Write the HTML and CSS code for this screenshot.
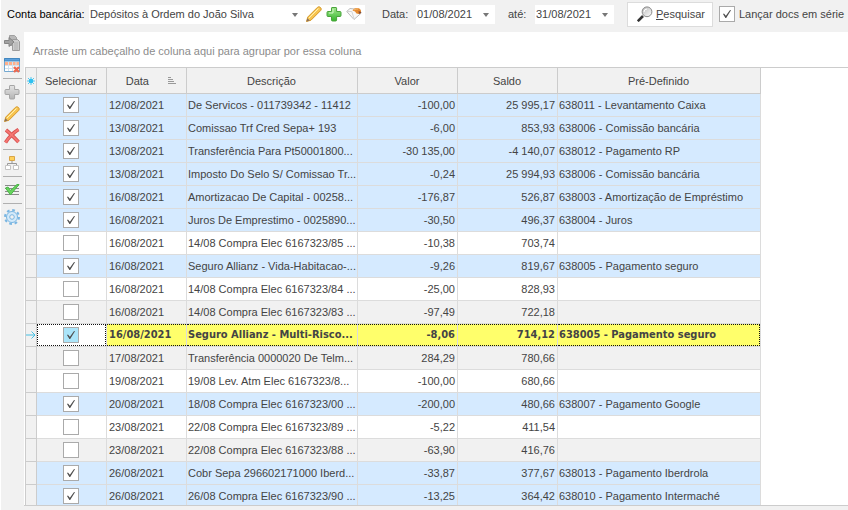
FILE: index.html
```html
<!DOCTYPE html>
<html lang="pt">
<head>
<meta charset="utf-8">
<title>Conta bancária</title>
<link rel="stylesheet" href="styles.css">
</head>
<body>
<svg class="defs" aria-hidden="true">
  <defs>
    <linearGradient id="gold" x1="0" y1="0" x2="1" y2="1"><stop offset="0" stop-color="#ffe48a"/><stop offset="1" stop-color="#f0a81e"/></linearGradient>
    <linearGradient id="green" x1="0" y1="0" x2="0" y2="1"><stop offset="0" stop-color="#a4e890"/><stop offset="1" stop-color="#35b52c"/></linearGradient>
    <linearGradient id="silver" x1="0" y1="0" x2="0" y2="1"><stop offset="0" stop-color="#e4e4e4"/><stop offset="1" stop-color="#b4b4b4"/></linearGradient>
    <linearGradient id="lens" x1="0" y1="0" x2="1" y2="1"><stop offset="0" stop-color="#b8b8b8"/><stop offset="1" stop-color="#ffffff"/></linearGradient>
    <symbol id="pencil" viewBox="0 0 16 16"><path d="M.5 15.500 1.800 11 11.500 1.300q1.500-1.300 3 .2t.2 3L5 14.200z" fill="url(#gold)" stroke="#d59a2d"/><path d="M3 12 12.500 2.500" stroke="#fff0ae"/><path d="M.4 15.600 1.400 12.200 3.800 14.600z" fill="#8b705c"/></symbol>
    <symbol id="plus" viewBox="0 0 16 16"><path d="M6 1.500h4q.6 0 .6.600V5.500H14q1 0 1 1v3q0 1-1 1h-3.400V14q0 1-1 1H6.500q-1 0-1-1v-3.500H2q-1 0-1-1v-3q0-1 1-1h3.500V2.100q0-.6.5-.6z"/></symbol>
  </defs>
</svg>
<form class="filters">
  <label class="account-label" for="account">Conta bancária:</label>
  <div class="account">
    <div class="combo"><select id="account"><option>Depósitos à Ordem do João Silva</option></select></div>
    <button type="button" class="icon-button" aria-label="Editar"><svg viewBox="0 0 16 16"><use href="#pencil"/></svg></button>
    <button type="button" class="icon-button" aria-label="Adicionar"><svg viewBox="0 0 16 16"><use href="#plus" fill="url(#green)" stroke="#4aa33c"/><path d="M7 3v4H3" fill="none" stroke="#d2f7c6"/></svg></button>
    <button type="button" class="icon-button" aria-label="Limpar"><svg viewBox="0 0 16 16"><path d="M.7 5.500 4 2.500l9.500 1L15.300 7 8 13.500z" fill="#f8f8f8" stroke="#bcbcbc"/><path d="M.8 5.500h5l2.200 7" fill="none" stroke="#d5d5d5"/><path d="M6.500 4.500Q8 1.500 11 2q3.500 0 4 3v2l-2 1-2.500-.5-1.500-2z" fill="#e58a2f"/><path d="M8 4q2-1.500 4-1" fill="none" stroke="#f6bd74"/><path d="M12.500 5 15 6v1l-2 1z" fill="#864c36"/></svg></button>
  </div>
  <label class="from-label" for="from">Data:</label>
  <div class="combo date"><input id="from" type="text" value="01/08/2021"></div>
  <label class="to-label" for="to">até:</label>
  <div class="combo date"><input id="to" type="text" value="31/08/2021"></div>
  <button type="button" class="search"><svg viewBox="0 0 16 16"><path d="M.8 15.200 6 10" stroke="#333" stroke-width="2.600"/><circle cx="10" cy="5.800" r="4.900" fill="url(#lens)" stroke="#8a8a8a"/><path d="M7 6q0-3 3-3" fill="none" stroke="#fff"/></svg><span><u>P</u>esquisar</span></button>
  <label class="series"><input type="checkbox" checked>Lançar docs em série</label>
</form>
<div class="workspace">
  <nav class="tools" aria-label="Ferramentas">
    <button type="button" aria-label="Importar"><svg viewBox="0 0 16 16"><path d="M5.500.500h5l2 2v8h-7z" fill="#b9b9b9" stroke="#a0a0a0"/><path d="M8.500 4.500h5l2 2v9h-7z" fill="#cdcdcd" stroke="#9c9c9c"/><path d="M10 8h4m-4 2h4m-4 2h4m-4 2h4" stroke="#aeaeae"/><path d="M.5 5.500H5v-3L10 7l-5 4.500v-3H.5z" fill="#a2a2a2" stroke="#858585"/></svg></button>
    <button type="button" aria-label="Remover linhas"><svg viewBox="0 0 16 16"><path d="M.5 1.500h15v13H.5z" fill="#fff" stroke="#74a8d0"/><path d="M.5 1.500h15V4H.5z" fill="#5ba0dc" stroke="#4387bf"/><path d="M1 5h14v3.500H1z" fill="#ffb08b"/><path d="M1 8.500h14M1 11.500h14M4.500 5v9M8.500 5v9M12 5v9" stroke="#d3e2ee"/><path d="m10 10 5 5m0-5-5 5" stroke="#ee6a50" stroke-width="2.400"/></svg></button>
    <hr>
    <button type="button" aria-label="Novo"><svg viewBox="0 0 16 16"><use href="#plus" fill="url(#silver)" stroke="#a5a5a5"/></svg></button>
    <button type="button" aria-label="Editar movimento"><svg viewBox="0 0 16 16"><use href="#pencil"/></svg></button>
    <button type="button" aria-label="Eliminar"><svg viewBox="0 0 16 16"><path d="M2 2q5 4 12.500 12M14.500 1.500Q7 6 1.500 14.500" fill="none" stroke="#d65050" stroke-width="3.600"/><path d="M2 2q5 4 12.500 12M14.500 1.500Q7 6 1.500 14.500" fill="none" stroke="#f57672" stroke-width="2"/></svg></button>
    <hr>
    <button type="button" aria-label="Hierarquia"><svg viewBox="0 0 16 16"><path d="M8 6v3M3.500 11.500V8.500h9v3" fill="none" stroke="#999"/><path d="M5.500 1.500h5v4h-5z" fill="#ffd15c" stroke="#d9a548"/><path d="M1.500 10.500h5v4h-5zm8 0h5v4h-5z" fill="#fff" stroke="#c4c4c4"/></svg></button>
    <hr>
    <button type="button" aria-label="Validar"><svg viewBox="0 0 16 16"><path d="M1 3.500h14M1 6.500h14M1 9.500h14M1 12.500h14" stroke="#8a8a8a"/><path d="m1.500 6 2.500-1 2.500 3.500L13 2.500h2L6.500 13z" fill="#67d45d" stroke="#4bb548"/></svg></button>
    <hr>
    <button type="button" aria-label="Definições"><svg viewBox="0 0 16 16"><g fill="none" stroke="#7ab6e2"><circle cx="8" cy="8" r="7" stroke-width="2" stroke-dasharray="2.750 2.750"/><circle cx="8" cy="8" r="5.500" fill="#d4eafa"/><circle cx="8" cy="8" r="2.300" fill="#f1f1f1"/></g></svg></button>
  </nav>
  <main class="grid-view">
    <p class="group-panel">Arraste um cabeçalho de coluna aqui para agrupar por essa coluna</p>
    <div class="table-area">
      <table>
        <colgroup><col class="c-mark"><col class="c-select"><col class="c-date"><col class="c-text"><col class="c-value"><col class="c-value"><col class="c-preset"></colgroup>
        <thead><tr><th class="mark"><svg viewBox="0 0 8 8"><circle cx="4" cy="4" r="2.300" fill="#2fc0f0"/><path d="M4 0v8M0 4h8M1 1l6 6M7 1 1 7" stroke="#2fc0f0" stroke-width=".8"/></svg></th><th>Selecionar</th><th><span class="sorted">Data<svg viewBox="0 0 8 8"><path d="M0 .5h3M0 2.500h5M0 4.500h6M0 6.500h8" stroke="#999"/></svg></span></th><th>Descrição</th><th>Valor</th><th>Saldo</th><th>Pré-Definido</th></tr></thead>
        <tbody>
          <tr class="on"><td></td><td><input type="checkbox" aria-label="Selecionar" checked></td><td>12/08/2021</td><td>De Servicos - 011739342 - 11412</td><td>-100,00</td><td>25 995,17</td><td>638011 - Levantamento Caixa</td></tr>
          <tr class="on"><td></td><td><input type="checkbox" aria-label="Selecionar" checked></td><td>13/08/2021</td><td>Comissao Trf Cred Sepa+ 193</td><td>-6,00</td><td>853,93</td><td>638006 - Comissão bancária</td></tr>
          <tr class="on"><td></td><td><input type="checkbox" aria-label="Selecionar" checked></td><td>13/08/2021</td><td>Transferência Para Pt50001800...</td><td>-30 135,00</td><td>-4 140,07</td><td>638012 - Pagamento RP</td></tr>
          <tr class="on"><td></td><td><input type="checkbox" aria-label="Selecionar" checked></td><td>13/08/2021</td><td>Imposto Do Selo S/ Comissao Tr...</td><td>-0,24</td><td>25 994,93</td><td>638006 - Comissão bancária</td></tr>
          <tr class="on"><td></td><td><input type="checkbox" aria-label="Selecionar" checked></td><td>16/08/2021</td><td>Amortizacao De Capital - 00258...</td><td>-176,87</td><td>526,87</td><td>638003 - Amortização de Empréstimo</td></tr>
          <tr class="on"><td></td><td><input type="checkbox" aria-label="Selecionar" checked></td><td>16/08/2021</td><td>Juros De Emprestimo - 0025890...</td><td>-30,50</td><td>496,37</td><td>638004 - Juros</td></tr>
          <tr><td></td><td><input type="checkbox" aria-label="Selecionar"></td><td>16/08/2021</td><td>14/08 Compra Elec 6167323/85 ...</td><td>-10,38</td><td>703,74</td><td></td></tr>
          <tr class="on"><td></td><td><input type="checkbox" aria-label="Selecionar" checked></td><td>16/08/2021</td><td>Seguro Allianz - Vida-Habitacao-...</td><td>-9,26</td><td>819,67</td><td>638005 - Pagamento seguro</td></tr>
          <tr><td></td><td><input type="checkbox" aria-label="Selecionar"></td><td>16/08/2021</td><td>14/08 Compra Elec 6167323/84 ...</td><td>-25,00</td><td>828,93</td><td></td></tr>
          <tr><td></td><td><input type="checkbox" aria-label="Selecionar"></td><td>16/08/2021</td><td>14/08 Compra Elec 6167323/83 ...</td><td>-97,49</td><td>722,18</td><td></td></tr>
          <tr class="current"><td class="mark"><svg class="arrow" viewBox="0 0 10 8"><path d="M0 4h9M5.500.500 9 4 5.500 7.500" fill="none" stroke="#45bfe3"/></svg></td><td><input type="checkbox" aria-label="Selecionar" checked></td><td>16/08/2021</td><td>Seguro Allianz - Multi-Risco...</td><td>-8,06</td><td>714,12</td><td>638005 - Pagamento seguro</td></tr>
          <tr><td></td><td><input type="checkbox" aria-label="Selecionar"></td><td>17/08/2021</td><td>Transferência 0000020 De Telm...</td><td>284,29</td><td>780,66</td><td></td></tr>
          <tr><td></td><td><input type="checkbox" aria-label="Selecionar"></td><td>19/08/2021</td><td>19/08 Lev. Atm Elec 6167323/8...</td><td>-100,00</td><td>680,66</td><td></td></tr>
          <tr class="on"><td></td><td><input type="checkbox" aria-label="Selecionar" checked></td><td>20/08/2021</td><td>18/08 Compra Elec 6167323/00 ...</td><td>-200,00</td><td>480,66</td><td>638007 - Pagamento Google</td></tr>
          <tr><td></td><td><input type="checkbox" aria-label="Selecionar"></td><td>23/08/2021</td><td>22/08 Compra Elec 6167323/89 ...</td><td>-5,22</td><td>411,54</td><td></td></tr>
          <tr><td></td><td><input type="checkbox" aria-label="Selecionar"></td><td>23/08/2021</td><td>22/08 Compra Elec 6167323/88 ...</td><td>-63,90</td><td>416,76</td><td></td></tr>
          <tr class="on"><td></td><td><input type="checkbox" aria-label="Selecionar" checked></td><td>26/08/2021</td><td>Cobr Sepa 296602171000 Iberd...</td><td>-33,87</td><td>377,67</td><td>638013 - Pagamento Iberdrola</td></tr>
          <tr class="on"><td></td><td><input type="checkbox" aria-label="Selecionar" checked></td><td>26/08/2021</td><td>26/08 Compra Elec 6167323/90 ...</td><td>-13,25</td><td>364,42</td><td>638010 - Pagamento Intermaché</td></tr>
        </tbody>
      </table>
    </div>
  </main>
</div>
</body>
</html>
```

FILE: styles.css
```css
* { box-sizing: border-box; }
body {
  margin: 0;
  height: 100vh;
  display: flex;
  flex-direction: column;
  overflow: hidden;
  background: #f1f1f1;
  border-left: 1px solid #fff;
  color: #444;
  font: 11px/14px Tahoma, "Liberation Sans", sans-serif;
}
.defs { position: absolute; width: 0; height: 0; }
button, input, select { font: inherit; color: inherit; margin: 0; }
button { padding: 0; border: 0; background: none; }
svg { display: block; width: 16px; height: 16px; flex: none; }

.filters {
  display: flex;
  align-items: center;
  height: 32px;
  padding: 0 0 4px 6px;
  white-space: nowrap;
}
.account-label { width: 82px; color: #000; }
.account { display: flex; align-items: center; background: #fff; height: 19px; width: 276px; }
.combo { position: relative; height: 19px; background: #fff; }
.account .combo { width: 215px; }
.combo::after {
  content: "";
  position: absolute;
  right: 6px;
  top: 8px;
  border: 3px solid transparent;
  border-top: 4px solid #777;
  border-bottom: 0;
  pointer-events: none;
}
.combo select, .combo input {
  appearance: none;
  display: block;
  width: 100%;
  height: 19px;
  padding: 0 12px 0 1px;
  border: 0;
  background: none;
}
.icon-button { padding: 0 2px; width: 20px; }
.from-label { margin-left: 17px; width: 34px; }
.to-label { margin-left: 13px; width: 27px; }
.date { width: 79px; }
.search {
  display: flex;
  align-items: center;
  gap: 3px;
  height: 25px;
  width: 86px;
  margin-left: 13px;
  padding-left: 9px;
  border: 1px solid #dcdcdc;
  background: #fff;
}
.series { display: flex; align-items: center; gap: 4px; margin-left: 6px; }

input[type="checkbox"] {
  appearance: none;
  display: block;
  flex: none;
  width: 16px;
  height: 16px;
  border: 1px solid #aaa;
  background: #fff;
}
input[type="checkbox"]:checked::before {
  content: "";
  display: block;
  width: 8px;
  height: 8px;
  margin: 3px;
  background: #505050;
  clip-path: polygon(0 50%, 12% 44%, 36% 72%, 88% 0, 100% 4%, 40% 100%, 30% 100%);
}

.workspace { flex: 1; min-height: 0; display: flex; }
.tools { width: 23px; flex: none; }
.tools button { display: block; height: 22px; padding: 3px; }
.tools hr { height: 1px; margin: 2px; border: 0; background: #b0b0b0; }
.grid-view {
  flex: 1;
  min-width: 0;
  display: flex;
  flex-direction: column;
  margin-bottom: 4px;
  border-bottom: 1px solid #ccc;
  background: #fff;
}
.group-panel { margin: 0; padding: 12px 9px 9px; color: #8c8c8c; }
.table-area { flex: 1; min-height: 0; overflow: hidden; border-top: 1px solid #ccc; border-left: 1px solid #ccc; margin-left: 1px; }

table { table-layout: fixed; width: 735px; border-spacing: 0; }
.c-mark { width: 11px; }
.c-select { width: 70px; }
.c-date { width: 80px; }
.c-text { width: 171px; }
.c-value { width: 100px; }
.c-preset { width: 203px; }
th, td {
  height: 23px;
  padding: 0 2px 0 1px;
  border: solid #dcdcdc;
  border-width: 0 1px 1px 0;
  overflow: hidden;
  white-space: nowrap;
  text-align: left;
}
th { height: 26px; background: #f1f1f1; border-color: #ccc; font-weight: normal; text-align: center; }
th.mark, td.mark { padding: 0; }
th.mark svg { width: 8px; height: 8px; margin: auto; }
.sorted { display: flex; justify-content: flex-end; align-items: center; gap: 19px; padding-right: 8px; }
.sorted svg { width: 8px; height: 8px; }
tbody tr:nth-child(even) { background: #f1f1f1; }
tbody tr.on { background: #d5eaff; }
tbody td:first-child { background: #f1f1f1; border-color: #ccc; }
td:nth-child(3) { padding-left: 2px; }
td:nth-child(5), td:nth-child(6) { text-align: right; }
td input[type="checkbox"] { margin: auto; }
.arrow { width: 10px; height: 8px; }
.current td { position: relative; background: #ffff6b; font-family: Tahoma, "DejaVu Sans Condensed", sans-serif; font-weight: bold; }
.current td:nth-child(2) { background: #fff; }
.current td:nth-child(n+2)::after {
  content: "";
  position: absolute;
  inset: 0;
  border: dotted #111;
  border-width: 1px 0;
  pointer-events: none;
}
.current td:nth-child(2)::after { border-width: 1px; }
.current td:last-child::after { border-right-width: 1px; }
.current input[type="checkbox"] { background: #abe5fa; }
```
